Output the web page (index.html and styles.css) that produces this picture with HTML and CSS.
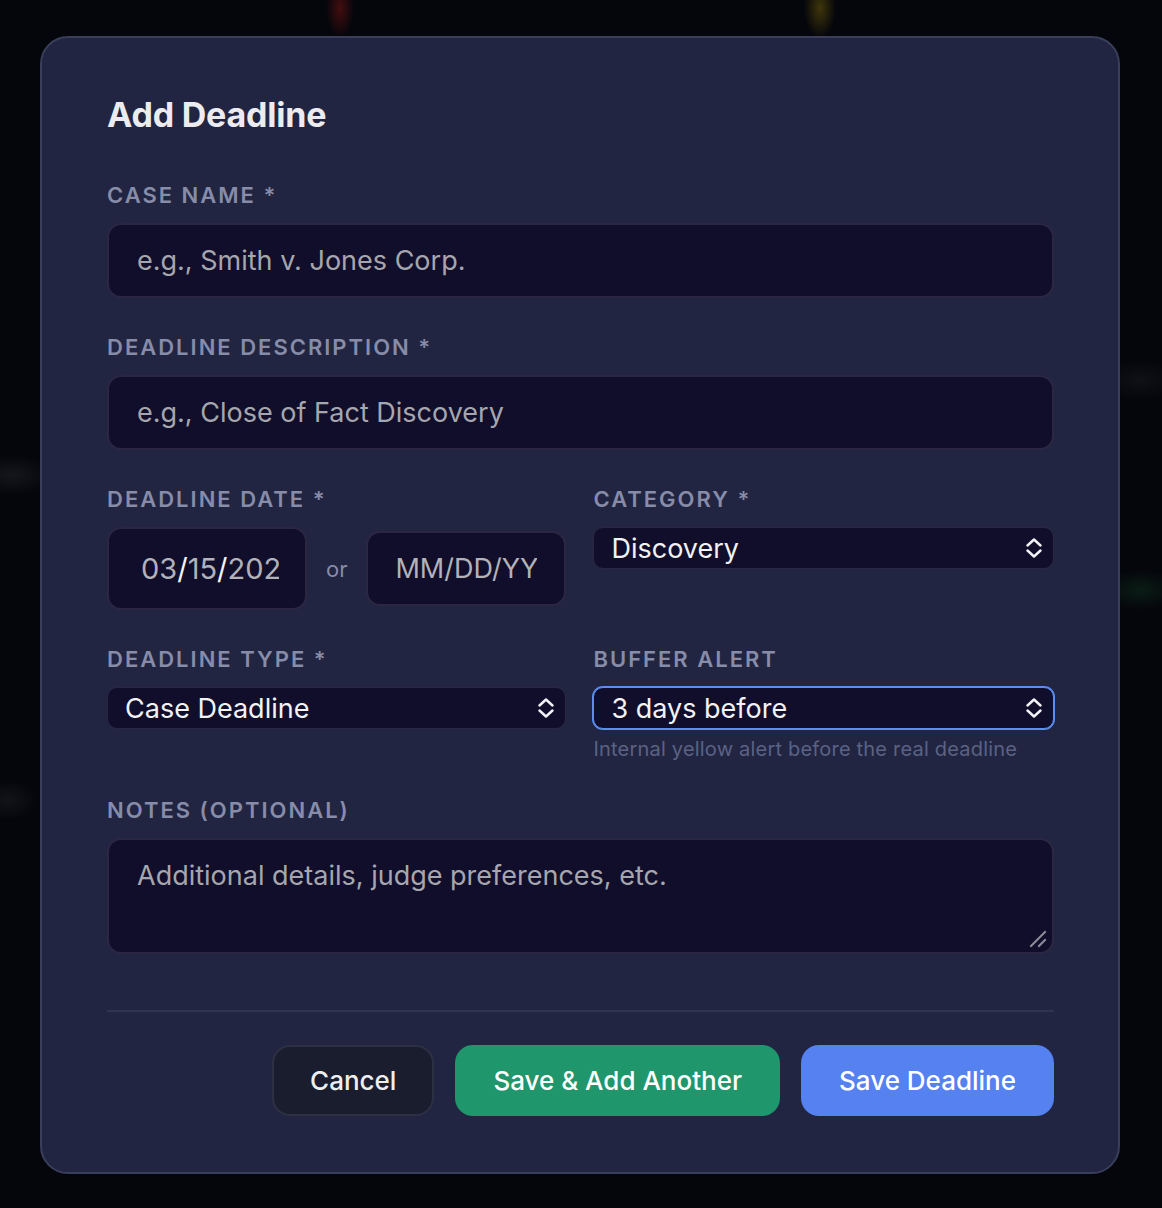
FILE: index.html
```html
<!DOCTYPE html>
<html lang="en">
<head>
<meta charset="utf-8">
<title>Add Deadline</title>
<link rel="stylesheet" href="styles.css">
</head>
<body>
<div class="modal">
  <h1 class="title">Add Deadline</h1>

  <div class="field">
    <label class="label">Case Name *</label>
    <input class="input" type="text" placeholder="e.g., Smith v. Jones Corp.">
  </div>

  <div class="field">
    <label class="label">Deadline Description *</label>
    <input class="input" type="text" placeholder="e.g., Close of Fact Discovery">
  </div>

  <div class="grid">
    <div class="col">
      <label class="label">Deadline Date *</label>
      <div class="date-row">
        <div class="date-box date-main"><div class="date-clip">03<span class="sep">/</span>15<span class="sep">/</span>2025</div></div>
        <span class="or">or</span>
        <div class="date-box date-alt"><div class="date-clip">MM/DD/YYYY</div></div>
      </div>
    </div>
    <div class="col">
      <label class="label">Category *</label>
      <div class="select">
        <span class="select-text">Discovery</span>
        <svg class="chev" viewBox="0 0 16 24" width="16" height="24"><path d="M1.5 9.5 L8 3.5 L14.5 9.5 M1.5 14.5 L8 20.5 L14.5 14.5" fill="none" stroke="#f2f2f4" stroke-width="2.4" stroke-linecap="round" stroke-linejoin="round"/></svg>
      </div>
    </div>

    <div class="col">
      <label class="label">Deadline Type *</label>
      <div class="select">
        <span class="select-text">Case Deadline</span>
        <svg class="chev" viewBox="0 0 16 24" width="16" height="24"><path d="M1.5 9.5 L8 3.5 L14.5 9.5 M1.5 14.5 L8 20.5 L14.5 14.5" fill="none" stroke="#f2f2f4" stroke-width="2.4" stroke-linecap="round" stroke-linejoin="round"/></svg>
      </div>
    </div>
    <div class="col">
      <label class="label">Buffer Alert</label>
      <div class="select focused">
        <span class="select-text">3 days before</span>
        <svg class="chev" viewBox="0 0 16 24" width="16" height="24"><path d="M1.5 9.5 L8 3.5 L14.5 9.5 M1.5 14.5 L8 20.5 L14.5 14.5" fill="none" stroke="#f2f2f4" stroke-width="2.4" stroke-linecap="round" stroke-linejoin="round"/></svg>
      </div>
      <div class="helper">Internal yellow alert before the real deadline</div>
    </div>
  </div>

  <div class="field">
    <label class="label">Notes (Optional)</label>
    <div class="textarea-wrap">
      <textarea class="textarea" placeholder="Additional details, judge preferences, etc."></textarea>
      <svg class="grip" viewBox="0 0 18 18" width="18" height="18"><path d="M2 16 L16 2 M10 16 L16 10" fill="none" stroke="#8c8b98" stroke-width="2" stroke-linecap="square"/></svg>
    </div>
  </div>

  <div class="divider"></div>

  <div class="actions">
    <button class="btn btn-cancel">Cancel</button>
    <button class="btn btn-green">Save &amp; Add Another</button>
    <button class="btn btn-blue">Save Deadline</button>
  </div>
</div>
</body>
</html>
```

FILE: styles.css
```css
* { box-sizing: border-box; }

html, body { margin: 0; height: 100%; }

body {
  background-color: #05060b;
  background-image:
    radial-gradient(ellipse 14px 30px at 340px 8px, rgba(120, 20, 20, 0.55), transparent),
    radial-gradient(ellipse 16px 30px at 820px 8px, rgba(120, 100, 10, 0.5), transparent),
    radial-gradient(ellipse 40px 20px at 1140px 590px, rgba(20, 70, 40, 0.35), transparent),
    radial-gradient(ellipse 40px 20px at 12px 475px, rgba(60, 60, 70, 0.3), transparent),
    radial-gradient(ellipse 30px 20px at 8px 800px, rgba(60, 60, 70, 0.25), transparent),
    radial-gradient(ellipse 40px 20px at 1140px 380px, rgba(60, 60, 70, 0.2), transparent);
  font-family: Inter, "Noto Sans", sans-serif;
  padding: 36px 0 0 40px;
}

.modal {
  width: 1080px;
  height: 1138px;
  background: #212541;
  border: 2px solid #393e5b;
  border-radius: 28px;
  padding: 57px 64px 0 65px;
}

.title {
  margin: 0 0 46px;
  font-size: 34px;
  line-height: 40px;
  font-weight: 700;
  color: #ececf0;
  letter-spacing: -0.2px;
}

.field { margin-bottom: 35px; }

.label {
  display: block;
  font-size: 22px;
  line-height: 28px;
  font-weight: 600;
  letter-spacing: 2px;
  text-transform: uppercase;
  color: #878ca9;
  margin-bottom: 14px;
}

.input, .textarea {
  display: block;
  width: 100%;
  background: #110e2b;
  border: 2px solid #2b2743;
  border-radius: 14px;
  color: #e8e8ec;
  font-family: inherit;
  font-size: 27px;
  outline: none;
}

.input {
  height: 75px;
  padding: 0 28px;
}

.input::placeholder, .textarea::placeholder { color: #a6a6ae; }

.textarea-wrap { position: relative; }

.textarea {
  height: 116px;
  padding: 19px 28px;
  resize: none;
  line-height: 34px;
}

.grip {
  position: absolute;
  right: 7px;
  bottom: 6px;
}

.grid {
  display: grid;
  grid-template-columns: minmax(0, 459fr) minmax(0, 460fr);
  column-gap: 27px;
  row-gap: 35px;
  margin-bottom: 35px;
}

.col { min-width: 0; }

.date-row {
  display: flex;
  align-items: center;
  gap: 19px;
}

.date-box {
  background: #110e2b;
  border: 2px solid #2b2743;
  border-radius: 14px;
  display: flex;
  align-items: center;
  min-width: 0;
}

.date-main {
  flex: 0 0 200px;
  height: 83px;
  padding: 0 26px 0 32px;
}

.date-alt {
  flex: 1 1 0;
  height: 75px;
  padding: 0 27px 0 27px;
}

.date-clip {
  width: 100%;
  overflow: hidden;
  white-space: nowrap;
  font-size: 27px;
  color: #b2b2b8;
}

.date-main .date-clip { font-size: 29px; }

.sep { color: #f4f4f6; }

.or {
  font-size: 22px;
  color: #878ca9;
}

.select {
  position: relative;
  height: 42px;
  background: #110e2b;
  border: 1px solid #2b2743;
  border-radius: 10px;
  display: flex;
  align-items: center;
  justify-content: space-between;
  padding: 0 11px 0 17px;
}

.select.focused {
  border-color: #5b8ef0;
  box-shadow: 0 0 0 1px #5b8ef0;
}

.select-text {
  font-size: 27px;
  color: #f2f2f4;
}

.chev { display: block; }

.helper {
  margin-top: 8px;
  font-size: 20px;
  line-height: 24px;
  color: #5b6284;
  letter-spacing: 0.2px;
}

.divider {
  height: 2px;
  background: #30354f;
  margin: 56px 0 33px;
}

.actions {
  display: flex;
  justify-content: flex-end;
  gap: 21px;
}

.btn {
  height: 71px;
  padding: 0 36px;
  border-radius: 18px;
  border: 2px solid transparent;
  font-family: inherit;
  font-size: 26px;
  font-weight: 500;
  color: #ffffff;
  cursor: pointer;
}

.btn-cancel {
  background: #191d2e;
  border-color: #2b3043;
  color: #eeeef0;
}

.btn-green { background: #1f966b; }
.btn-blue { background: #5581f1; }
```
